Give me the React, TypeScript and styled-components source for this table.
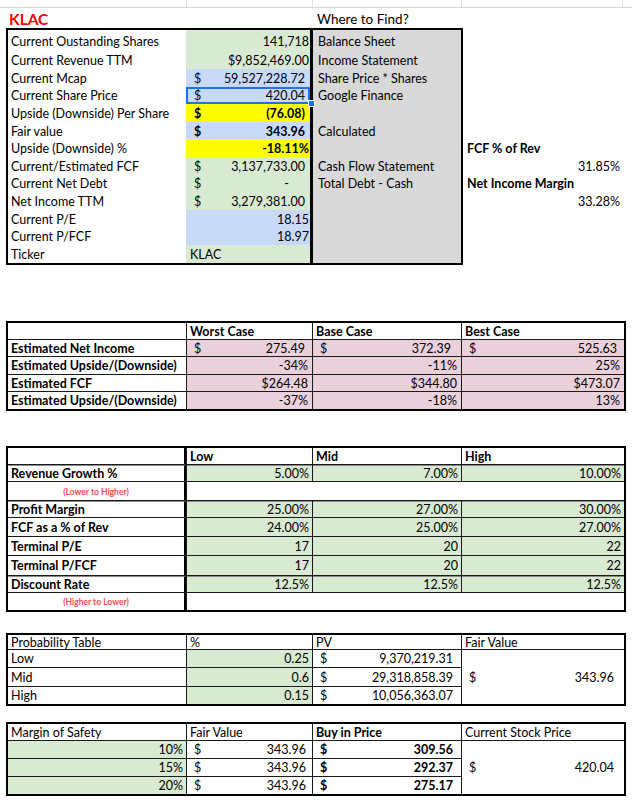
import React from "react";
import styled, { createGlobalStyle } from "styled-components";

const GREEN = "#d9ead3";
const BLUE = "#c9daf8";
const YELLOW = "#ffff00";
const PINK = "#ead1dc";
const GRAY = "#d9d9d9";

const ROWS = "21px 18px repeat(11, 17.6px)";

const GlobalStyle = createGlobalStyle`
  html, body {
    margin: 0;
    padding: 0;
    background: #fff;
  }
  body {
    font-family: Lato, "Noto Sans", sans-serif;
    font-size: 12.5px;
    color: #000;
  }
`;

const Page = styled.div`
  width: 632px;
  height: 805px;
  overflow: hidden;
`;

const TopStrip = styled.div`
  height: 7px;
  border-bottom: 1px solid #d6d6d6;
  display: grid;
  grid-template-columns: 187px 126px 149px 161px;
  & > span {
    border-right: 1px solid #e2e2e2;
  }
`;

const TitleRow = styled.div`
  height: 20px;
  display: grid;
  grid-template-columns: 313px 1fr;
  align-items: end;
`;

const Title = styled.div`
  color: #ff0000;
  font-weight: 700;
  font-size: 15.5px;
  padding-left: 9px;
  line-height: 18px;
`;

const WhereLabel = styled.div`
  font-size: 13.5px;
  padding-left: 4px;
  line-height: 18px;
`;

const TopSection = styled.div`
  display: flex;
  padding-left: 6px;
`;

const InfoBox = styled.div`
  width: 307px;
  box-sizing: border-box;
  border: 2px solid #000;
  border-right-width: 3px;
  display: grid;
  grid-template-columns: 178px 1fr;
  grid-template-rows: ${ROWS};
`;

const Label = styled.div`
  display: flex;
  align-items: center;
  padding: 1px 0 0 3px;
  white-space: nowrap;
`;

interface IValueProps {
  $bg: string;
  $bold?: boolean;
  $left?: boolean;
  $acct?: boolean;
  $selected?: boolean;
}

const Value = styled.div<IValueProps>`
  position: relative;
  display: flex;
  align-items: center;
  justify-content: ${(p) => (p.$left ? "flex-start" : "space-between")};
  padding: 1px ${(p) => (p.$acct ? 5 : 1)}px 0 ${(p) => (p.$left ? 4 : 8)}px;
  background: ${(p) => p.$bg};
  font-weight: ${(p) => (p.$bold ? 700 : 400)};
  box-shadow: ${(p) => (p.$selected ? "inset 0 0 0 2px #1a73e8" : "none")};
  white-space: nowrap;
`;

const Dash = styled.span`
  margin-right: 16px;
`;

const Handle = styled.span`
  position: absolute;
  right: -5px;
  bottom: -3px;
  width: 5px;
  height: 5px;
  background: #1a73e8;
  border: 1px solid #fff;
  z-index: 2;
`;

const SourceBox = styled.div`
  width: 150px;
  box-sizing: border-box;
  border: 2px solid #000;
  border-left: 0;
  background: ${GRAY};
  display: grid;
  grid-template-rows: ${ROWS};
`;

const Source = styled.div`
  display: flex;
  align-items: center;
  padding: 1px 0 0 5px;
  white-space: nowrap;
`;

const SideNotes = styled.div`
  flex: 1;
  padding: 2px 12px 0 4px;
  display: grid;
  grid-template-rows: ${ROWS};
`;

const Note = styled.div<{ $bold?: boolean; $right?: boolean }>`
  display: flex;
  align-items: center;
  justify-content: ${(p) => (p.$right ? "flex-end" : "flex-start")};
  padding-top: 1px;
  font-weight: ${(p) => (p.$bold ? 700 : 400)};
  white-space: nowrap;
`;

interface ISheetProps {
  $rows: string;
  $mt: number;
}

const Sheet = styled.div<ISheetProps>`
  margin: ${(p) => p.$mt}px 0 0 6px;
  width: 620px;
  box-sizing: border-box;
  border: 2px solid #000;
  background: #1a1a1a;
  display: grid;
  grid-template-columns: 178px 125px 148px 162px;
  grid-template-rows: ${(p) => p.$rows};
  gap: 1px;
`;

type Align = "left" | "right" | "acct" | "center";

interface ICellProps {
  $bg?: string;
  $bold?: boolean;
  $align?: Align;
  $span?: number;
  $rowSpan?: number;
  $thick?: boolean;
  $grayTop?: boolean;
  $padR?: number;
}

const justify = (a?: Align) =>
  a === "right"
    ? "flex-end"
    : a === "center"
    ? "center"
    : a === "acct"
    ? "space-between"
    : "flex-start";

const Cell = styled.div<ICellProps>`
  background: ${(p) => p.$bg ?? "#fff"};
  display: flex;
  align-items: center;
  justify-content: ${(p) => justify(p.$align)};
  padding: 2px ${(p) => p.$padR ?? (p.$align === "acct" ? 7 : 3)}px 0
    ${(p) => (p.$align === "acct" ? 7 : 3)}px;
  line-height: 14px;
  font-weight: ${(p) => (p.$bold ? 700 : 400)};
  grid-column: ${(p) => (p.$span ? `span ${p.$span}` : "auto")};
  grid-row: ${(p) => (p.$rowSpan ? `span ${p.$rowSpan}` : "auto")};
  box-sizing: border-box;
  white-space: nowrap;
  overflow: hidden;
  border-right: ${(p) => (p.$thick ? "2px solid #000" : "0")};
  border-top: ${(p) => (p.$grayTop ? "1px solid #8a8a8a" : "0")};
`;

const Hint = styled.span`
  color: #ff4d4d;
  font-size: 8.5px;
  font-weight: 700;
`;

interface IInfoRow {
  label: string;
  value: string;
  bg: string;
  cur?: boolean;
  bold?: boolean;
  left?: boolean;
  selected?: boolean;
  source?: string;
}

const info: IInfoRow[] = [
  { label: "Current Oustanding Shares", value: "141,718", bg: GREEN, source: "Balance Sheet" },
  { label: "Current Revenue TTM", value: "$9,852,469.00", bg: GREEN, source: "Income Statement" },
  { label: "Current Mcap", value: "59,527,228.72", bg: BLUE, cur: true, source: "Share Price * Shares" },
  { label: "Current Share Price", value: "420.04", bg: BLUE, cur: true, selected: true, source: "Google Finance" },
  { label: "Upside (Downside) Per Share", value: "(76.08)", bg: YELLOW, cur: true, bold: true },
  { label: "Fair value", value: "343.96", bg: BLUE, cur: true, bold: true, source: "Calculated" },
  { label: "Upside (Downside) %", value: "-18.11%", bg: YELLOW, bold: true },
  { label: "Current/Estimated FCF", value: "3,137,733.00", bg: GREEN, cur: true, source: "Cash Flow Statement" },
  { label: "Current Net Debt", value: "-", bg: GREEN, cur: true, source: "Total Debt - Cash" },
  { label: "Net Income TTM", value: "3,279,381.00", bg: GREEN, cur: true },
  { label: "Current P/E", value: "18.15", bg: BLUE },
  { label: "Current P/FCF", value: "18.97", bg: BLUE },
  { label: "Ticker", value: "KLAC", bg: GREEN, left: true },
];

const notes: { text: string; bold?: boolean; right?: boolean }[] = [
  { text: "" },
  { text: "" },
  { text: "" },
  { text: "" },
  { text: "" },
  { text: "" },
  { text: "FCF % of Rev", bold: true },
  { text: "31.85%", right: true },
  { text: "Net Income Margin", bold: true },
  { text: "33.28%", right: true },
  { text: "" },
  { text: "" },
  { text: "" },
];

const scenarios = [
  { label: "Estimated Net Income", acct: true, values: ["275.49", "372.39", "525.63"] },
  { label: "Estimated Upside/(Downside)", values: ["-34%", "-11%", "25%"] },
  { label: "Estimated FCF", values: ["$264.48", "$344.80", "$473.07"] },
  { label: "Estimated Upside/(Downside)", values: ["-37%", "-18%", "13%"] },
];

const assumptions = [
  { label: "Revenue Growth %", values: ["5.00%", "7.00%", "10.00%"] },
  { hint: "(Lower to Higher)" },
  { label: "Profit Margin", values: ["25.00%", "27.00%", "30.00%"], grayTop: true },
  { label: "FCF as a % of Rev", values: ["24.00%", "25.00%", "27.00%"] },
  { label: "Terminal P/E", values: ["17", "20", "22"] },
  { label: "Terminal P/FCF", values: ["17", "20", "22"] },
  { label: "Discount Rate", values: ["12.5%", "12.5%", "12.5%"], grayTop: true },
  { hint: "(Higher to Lower)" },
];

const probability = [
  { label: "Low", pct: "0.25", pv: "9,370,219.31" },
  { label: "Mid", pct: "0.6", pv: "29,318,858.39" },
  { label: "High", pct: "0.15", pv: "10,056,363.07" },
];

const safety = [
  { pct: "10%", buy: "309.56" },
  { pct: "15%", buy: "292.37" },
  { pct: "20%", buy: "275.17" },
];

export default function App() {
  return (
    <Page>
      <GlobalStyle />
      <TopStrip>
        <span />
        <span />
        <span />
        <span />
      </TopStrip>
      <TitleRow>
        <Title>KLAC</Title>
        <WhereLabel>Where to Find?</WhereLabel>
      </TitleRow>

      <TopSection>
        <InfoBox>
          {info.map((row) => (
            <React.Fragment key={row.label}>
              <Label>{row.label}</Label>
              <Value
                $bg={row.bg}
                $bold={row.bold}
                $left={row.left}
                $acct={row.cur}
                $selected={row.selected}
              >
                {row.left ? null : <span>{row.cur ? "$" : ""}</span>}
                {row.value === "-" ? <Dash>-</Dash> : <span>{row.value}</span>}
                {row.selected ? <Handle /> : null}
              </Value>
            </React.Fragment>
          ))}
        </InfoBox>
        <SourceBox>
          {info.map((row) => (
            <Source key={row.label}>{row.source ?? ""}</Source>
          ))}
        </SourceBox>
        <SideNotes>
          {notes.map((n, i) => (
            <Note key={i} $bold={n.bold} $right={n.right}>
              {n.text}
            </Note>
          ))}
        </SideNotes>
      </TopSection>

      <Sheet $mt={56} $rows="16px repeat(4, 16.5px)">
        <Cell />
        <Cell $bold>Worst Case</Cell>
        <Cell $bold>Base Case</Cell>
        <Cell $bold>Best Case</Cell>
        {scenarios.map((row, r) => (
          <React.Fragment key={r}>
            <Cell $bold>{row.label}</Cell>
            {row.values.map((v, i) =>
              row.acct ? (
                <Cell key={i} $bg={PINK} $align="acct" $padR={i === 1 ? 10 : 7}>
                  <span>$</span>
                  <span>{v}</span>
                </Cell>
              ) : (
                <Cell key={i} $bg={PINK} $align="right" $padR={4}>
                  {v}
                </Cell>
              )
            )}
          </React.Fragment>
        ))}
      </Sheet>

      <Sheet $mt={35} $rows="16px 16px 18px 16px 18px 18px 19px 16px 17px">
        <Cell $thick />
        <Cell $bold>Low</Cell>
        <Cell $bold>Mid</Cell>
        <Cell $bold>High</Cell>
        {assumptions.map((row, r) =>
          row.hint ? (
            <React.Fragment key={r}>
              <Cell $thick $align="center" $grayTop={r === 0}>
                <Hint>{row.hint}</Hint>
              </Cell>
              <Cell $span={3} />
            </React.Fragment>
          ) : (
            <React.Fragment key={r}>
              <Cell $thick $bold $grayTop={row.grayTop || r === 0}>
                {row.label}
              </Cell>
              {row.values!.map((v, i) => (
                <Cell key={i} $bg={GREEN} $align="right" $grayTop={row.grayTop || r === 0}>
                  {v}
                </Cell>
              ))}
            </React.Fragment>
          )
        )}
      </Sheet>

      <Sheet $mt={21} $rows="14px 17px 18px 17px">
        <Cell>Probability Table</Cell>
        <Cell>%</Cell>
        <Cell>PV</Cell>
        <Cell>Fair Value</Cell>
        {probability.map((row, r) => (
          <React.Fragment key={row.label}>
            <Cell>{row.label}</Cell>
            <Cell $bg={GREEN} $align="right">
              {row.pct}
            </Cell>
            <Cell $align="acct" $padR={8}>
              <span>$</span>
              <span>{row.pv}</span>
            </Cell>
            {r === 0 ? (
              <Cell $rowSpan={3} $align="acct" $padR={10}>
                <span>$</span>
                <span>343.96</span>
              </Cell>
            ) : null}
          </React.Fragment>
        ))}
      </Sheet>

      <Sheet $mt={16} $rows="16px 17px 17px 17px">
        <Cell>Margin of Safety</Cell>
        <Cell>Fair Value</Cell>
        <Cell $bold>Buy in Price</Cell>
        <Cell>Current Stock Price</Cell>
        {safety.map((row, r) => (
          <React.Fragment key={row.pct}>
            <Cell $bg={GREEN} $align="right">
              {row.pct}
            </Cell>
            <Cell $align="acct" $padR={6}>
              <span>$</span>
              <span>343.96</span>
            </Cell>
            <Cell $align="acct" $bold $padR={8}>
              <span>$</span>
              <span>{row.buy}</span>
            </Cell>
            {r === 0 ? (
              <Cell $rowSpan={3} $align="acct" $padR={10}>
                <span>$</span>
                <span>420.04</span>
              </Cell>
            ) : null}
          </React.Fragment>
        ))}
      </Sheet>
    </Page>
  );
}
